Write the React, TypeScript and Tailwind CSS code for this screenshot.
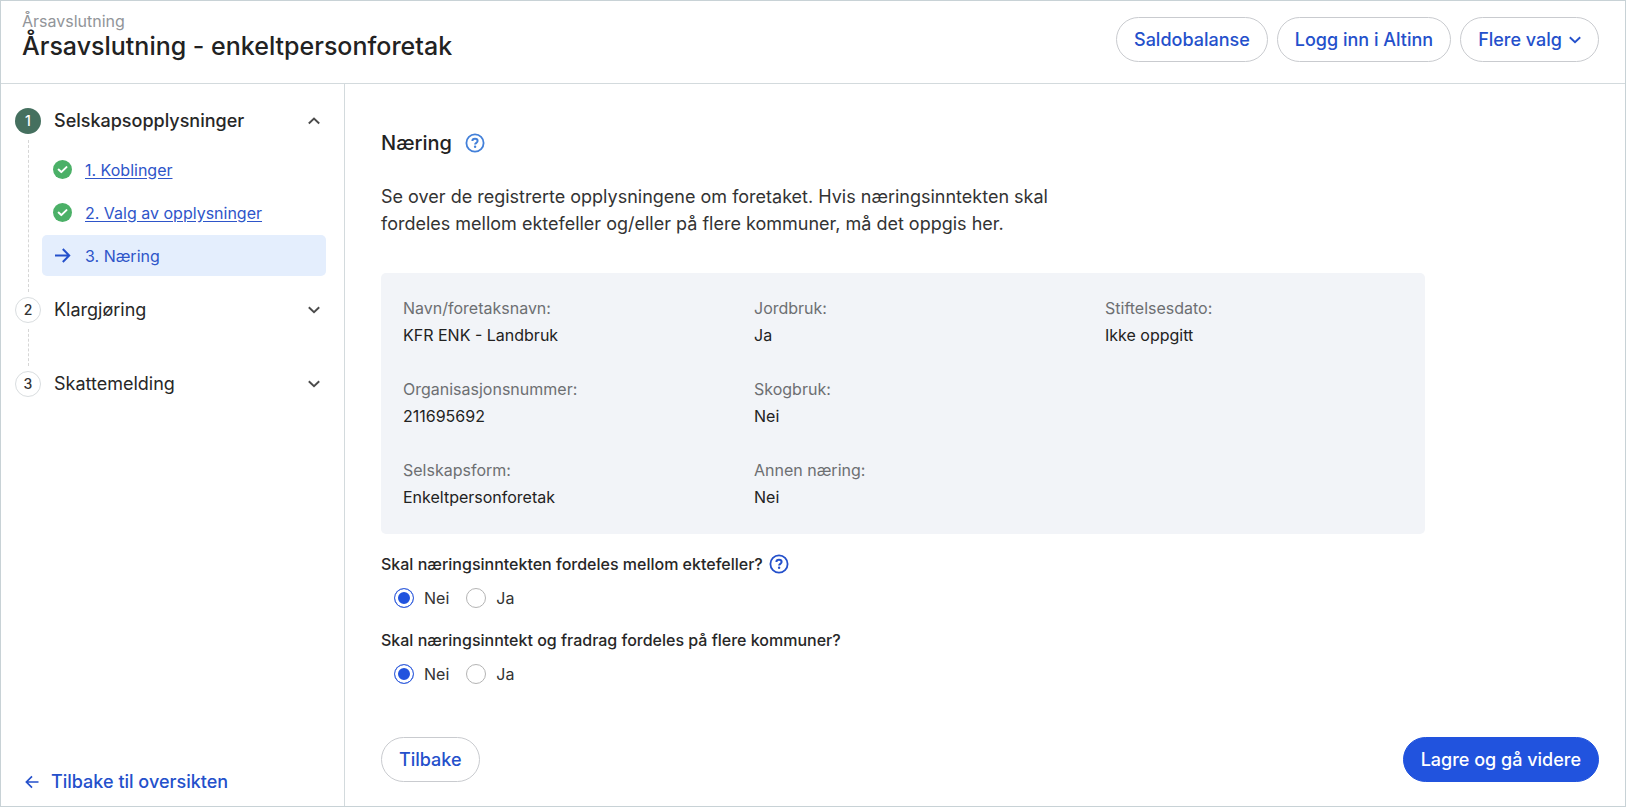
import { useState } from "react"
import type { ReactNode } from "react"
import clsx from "clsx"

const details = [
  { label: "Navn/foretaksnavn:", value: "KFR ENK - Landbruk" },
  { label: "Jordbruk:", value: "Ja" },
  { label: "Stiftelsesdato:", value: "Ikke oppgitt" },
  { label: "Organisasjonsnummer:", value: "211695692" },
  { label: "Skogbruk:", value: "Nei" },
  null,
  { label: "Selskapsform:", value: "Enkeltpersonforetak" },
  { label: "Annen næring:", value: "Nei" },
]

function Chevron({ up, className }: { up?: boolean; className?: string }) {
  return (
    <svg
      width="12"
      height="12"
      viewBox="0 0 12 12"
      fill="none"
      stroke="currentColor"
      strokeWidth="1.9"
      className={className}
    >
      <path d={up ? "M0.8 8.5L6 3.5l5.2 5" : "M0.8 3.3L6 8.3l5.2-5"} />
    </svg>
  )
}

function ArrowRight() {
  return (
    <svg width="19" height="19" viewBox="0 0 19 19" fill="none" stroke="#2450cb" strokeWidth="2">
      <path d="M2 9.5h14M9.8 3l6.4 6.5-6.4 6.5" />
    </svg>
  )
}

function ArrowLeft() {
  return (
    <svg width="14" height="14" viewBox="0 0 14 14" fill="none" stroke="currentColor" strokeWidth="1.7">
      <path d="M13.5 7H1.6M7 1.4L1.4 7 7 12.6" />
    </svg>
  )
}

function DoneIcon() {
  return (
    <svg width="19" height="19" viewBox="0 0 19 19" fill="none">
      <circle cx="9.5" cy="9.5" r="9.5" fill="#4bb067" />
      <path
        d="M5.6 9.6l2.7 2.5 5.2-5"
        stroke="white"
        strokeWidth="2"
        strokeLinecap="round"
        strokeLinejoin="round"
      />
    </svg>
  )
}

function PillButton({ primary, children }: { primary?: boolean; children: ReactNode }) {
  return (
    <button
      type="button"
      className={clsx(
        "flex h-[45px] items-center gap-[7px] rounded-full border px-[17px] text-lg font-medium whitespace-nowrap",
        primary
          ? "border-[#2153de] bg-[#2153de] text-white"
          : "border-[#c9cbcf] bg-white text-[#2450cb]",
      )}
    >
      {children}
    </button>
  )
}

function HelpButton({ label, className }: { label: string; className: string }) {
  return (
    <button type="button" aria-label={label} className={className}>
      <svg width="20" height="20" viewBox="0 0 20 20" fill="none" stroke="currentColor">
        <circle cx="10" cy="10" r="8.6" strokeWidth="1.8" />
        <path
          d="M7.4 8.1C7.4 6.6 8.5 5.8 10 5.8s2.6.8 2.6 2.2c0 1.8-2.5 1.8-2.5 3.5"
          strokeWidth="2"
        />
        <circle cx="10.1" cy="13.7" r="1.2" fill="currentColor" stroke="none" />
      </svg>
    </button>
  )
}

function Step({
  number,
  title,
  active,
  last,
  children,
}: {
  number: number
  title: string
  active?: boolean
  last?: boolean
  children?: ReactNode
}) {
  return (
    <li className="flex gap-[13px]">
      <div className="flex w-[26px] flex-col items-center">
        <span
          className={clsx(
            "flex size-[26px] shrink-0 items-center justify-center rounded-full text-sm font-medium",
            active ? "bg-[#45705f] text-white" : "border border-[#d9dddf] text-[#333]",
          )}
        >
          {number}
        </span>
        {!last && <span className="mt-[6px] mb-[5px] flex-1 border-l border-dashed border-[#d6d6d6]" />}
      </div>
      <div className={clsx("min-w-0 flex-1", !last && !children && "pb-12")}>
        <button
          type="button"
          aria-expanded={Boolean(active)}
          className={clsx(
            "flex h-[26px] w-full items-center justify-between pr-6 text-lg text-[#272727]",
            active && "font-medium",
          )}
        >
          {title}
          <Chevron up={active} className="text-[#4b4b4b]" />
        </button>
        {children}
      </div>
    </li>
  )
}

function SubStep({ title, current }: { title: string; current?: boolean }) {
  return (
    <li>
      <a
        href="#"
        aria-current={current ? "step" : undefined}
        className={clsx(
          "flex h-[41px] items-center gap-[13px] rounded-[5px] pl-[11px] text-base text-[#2e55c9]",
          current && "bg-[#e4eefd]",
        )}
      >
        {current ? <ArrowRight /> : <DoneIcon />}
        <span className={clsx(!current && "underline underline-offset-2")}>{title}</span>
      </a>
    </li>
  )
}

function Question({ name, text, help }: { name: string; text: string; help?: boolean }) {
  const [answer, setAnswer] = useState("Nei")
  return (
    <div role="radiogroup" aria-labelledby={name}>
      <div className="flex h-6 items-center gap-[6px]">
        <span id={name} className="text-base font-medium text-[#272727]">
          {text}
        </span>
        {help && <HelpButton label="Hjelp" className="text-[#2450cb]" />}
      </div>
      <div className="mt-[10px] flex gap-[17px] pl-[13px]">
        {["Nei", "Ja"].map((option) => (
          <label key={option} className="flex items-center gap-[10px] text-base text-[#333]">
            <input
              type="radio"
              name={name}
              value={option}
              checked={answer === option}
              onChange={() => setAnswer(option)}
              className="size-[20px] appearance-none rounded-full border border-[#b4b4b4] bg-white checked:border-[#3a63dd] checked:bg-[#2153de] checked:shadow-[inset_0_0_0_3px_white]"
            />
            {option}
          </label>
        ))}
      </div>
    </div>
  )
}

export default function App() {
  return (
    <div className="flex min-h-screen flex-col border border-[#c8d2d6] bg-white font-[Inter,sans-serif] text-[#222]">
      <header className="flex justify-between border-b border-[#d3dadd] pt-[10px] pr-[26px] pb-[21px] pl-[21px]">
        <div>
          <p className="text-base leading-5 text-[#929599]">Årsavslutning</p>
          <h1 className="text-[25px] leading-[30px] font-medium">Årsavslutning - enkeltpersonforetak</h1>
        </div>
        <div className="flex gap-[9px] pt-[6px]">
          <PillButton>Saldobalanse</PillButton>
          <PillButton>Logg inn i Altinn</PillButton>
          <PillButton>
            Flere valg
            <Chevron />
          </PillButton>
        </div>
      </header>

      <div className="flex flex-1">
        <aside className="flex w-[344px] shrink-0 flex-col justify-between border-r border-[#d3dadd] pt-6 pb-3">
          <ol className="pl-[14px]">
            <Step number={1} title="Selskapsopplysninger" active>
              <ul className="mt-[15px] mr-[18px] mb-[21px] -ml-3 flex flex-col gap-[2px]">
                <SubStep title="1. Koblinger" />
                <SubStep title="2. Valg av opplysninger" />
                <SubStep title="3. Næring" current />
              </ul>
            </Step>
            <Step number={2} title="Klargjøring" />
            <Step number={3} title="Skattemelding" last />
          </ol>
          <a href="#" className="flex items-center gap-3 pl-6 text-lg leading-6 font-medium text-[#2450cb]">
            <ArrowLeft />
            Tilbake til oversikten
          </a>
        </aside>

        <main className="flex min-w-0 flex-1 flex-col pt-[43px] pr-[26px] pb-6 pl-9">
          <div className="flex items-center gap-[13px]">
            <h2 className="text-xl leading-8 font-medium">Næring</h2>
            <HelpButton label="Hjelp om næring" className="text-[#4380d9]" />
          </div>
          <p className="mt-6 max-w-[700px] text-lg leading-[27px] text-[#333]">
            Se over de registrerte opplysningene om foretaket. Hvis næringsinntekten skal fordeles
            mellom ektefeller og/eller på flere kommuner, må det oppgis her.
          </p>

          <dl className="mt-9 grid max-w-[1044px] grid-cols-3 gap-x-[53px] gap-y-[27px] rounded-[5px] bg-[#f2f4f8] px-[22px] pt-[22px] pb-[23px] text-base leading-[27px]">
            {details.map((item, i) =>
              item ? (
                <div key={item.label}>
                  <dt className="text-[#6d6f72]">{item.label}</dt>
                  <dd className="text-[#222]">{item.value}</dd>
                </div>
              ) : (
                <div key={i} />
              ),
            )}
          </dl>

          <div className="mt-[18px] flex flex-col gap-[18px]">
            <Question name="ektefeller" text="Skal næringsinntekten fordeles mellom ektefeller?" help />
            <Question name="kommuner" text="Skal næringsinntekt og fradrag fordeles på flere kommuner?" />
          </div>

          <div className="mt-auto flex justify-between">
            <PillButton>Tilbake</PillButton>
            <PillButton primary>Lagre og gå videre</PillButton>
          </div>
        </main>
      </div>
    </div>
  )
}
